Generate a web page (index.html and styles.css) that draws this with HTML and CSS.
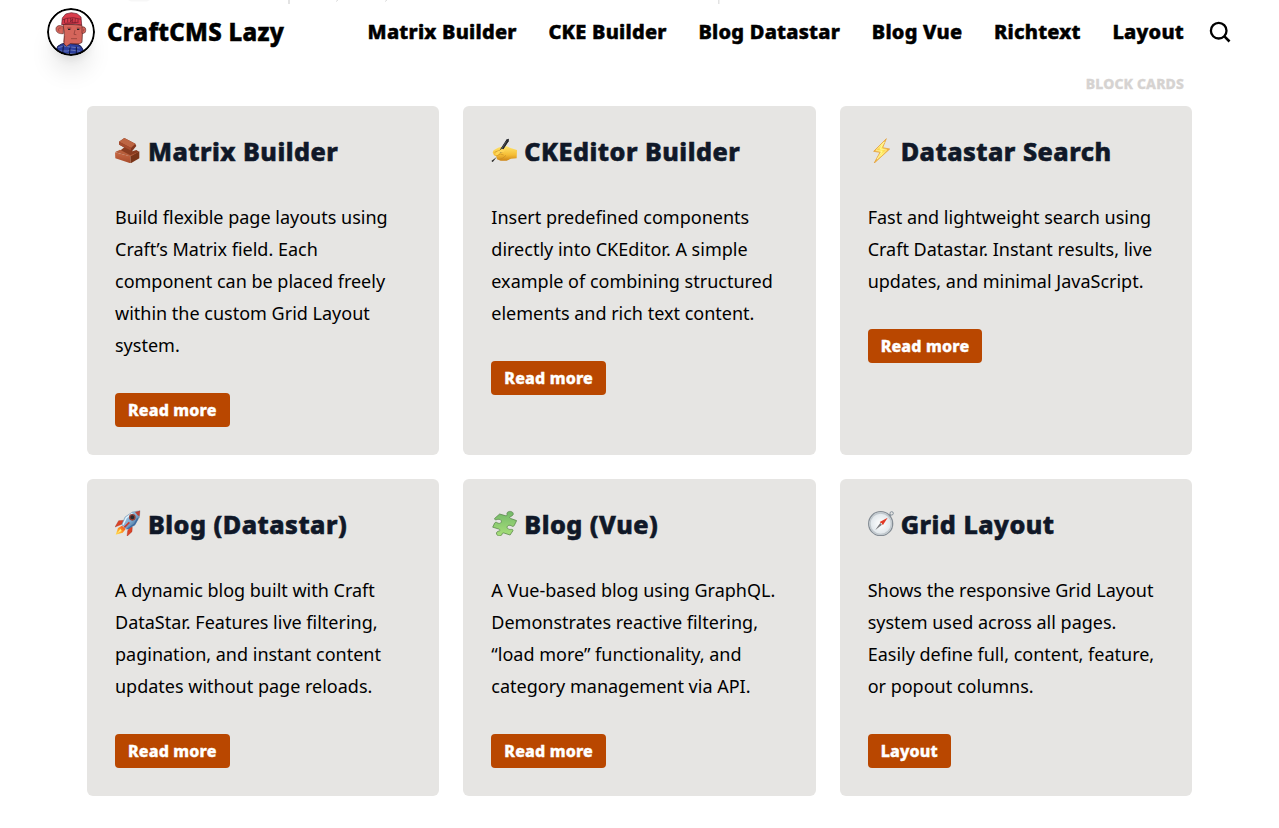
FILE: index.html
```html
<!DOCTYPE html>
<html lang="en">
<head>
<meta charset="utf-8">
<title>CraftCMS Lazy</title>
<link rel="stylesheet" href="styles.css">
</head>
<body>
<svg class="scrolled" viewBox="0 0 1279 4" aria-hidden="true"><path d="M128 0h22l-3 1.500h-16z" fill="#f7f7f7"/><path d="M288 0h2v4h-2zM718 0h1.500v4h-1.500z" fill="#e3e3e3"/><path d="M336 1.500l2-1.500M385 1.500l2-1.500" stroke="#ddd" fill="none"/></svg>
<header class="header">
  <a class="brand">
    <svg class="avatar" viewBox="27 24 144 144">
      <defs><clipPath id="face"><circle cx="99" cy="96" r="69"/></clipPath></defs>
      <circle cx="99" cy="96" r="69" fill="#fff"/>
      <g clip-path="url(#face)">
        <path d="M55 151l4-12 12-7 14-3 34 4 10 6 7 12-10 18H58z" fill="#2c3f9f" stroke="#17194a" stroke-width="3"/>
        <path d="M61 143l17-5 18 3M60 153h29l9-3 29 4M100 141l25 3M81 160l35 2" fill="none" stroke="#8793c7" stroke-width="2"/>
        <path d="M76 137l-2 25M96 143l-2 25M115 140v20" stroke="#11153f" stroke-width="3"/>
        <path d="M75 72l56 3 3 10-2 42-9 5-26-1-11 8-8-7 1-32z" fill="#d5655b" stroke="#4d1d1b" stroke-width="2"/>
        <path d="M76 80c-12-7-23-2-22 8s9 14 22 13zM132 81c9-2 12 4 11 11s-5 9-11 8z" fill="#d5655b" stroke="#602927" stroke-width="2"/>
        <path d="M70 84c-9-1-10 3-7 10M138 87l-2 7M80 108l-3 19M101 130l22 2" fill="none" stroke="#8a3936" stroke-width="2"/>
        <path d="M71 74l2-20 10-12 17-4 17 3 12 10 2 24-20-3-24 1z" fill="#d93d4c" stroke="#5f1724" stroke-width="2"/>
        <path d="M73 60l13-5 20-2 23 5M80 57l-1 12M89 55v12M98 54v12l6-10v12M112 55l-1 13M120 57v12M80 70l39-3" fill="none" stroke="#681a29" stroke-width="2"/>
        <path d="M87 84h13M116 84h12" stroke="#a8403e" stroke-width="3"/>
        <path d="M90 86h7v4h-7zM117 86h7v4h-7z" fill="#182226"/>
        <path d="M111 90l-3 13 7 1M99 116h18" fill="none" stroke="#8c3c37" stroke-width="2.200"/>
      </g>
      <circle cx="99" cy="96" r="69" fill="none" stroke="#000" stroke-width="6"/>
    </svg>
    <span>CraftCMS Lazy</span>
  </a>
  <nav class="nav"><a>Matrix Builder</a><a>CKE Builder</a><a>Blog Datastar</a><a>Blog Vue</a><a>Richtext</a><a>Layout</a></nav>
  <svg class="search" viewBox="0 0 24 24"><circle cx="10.700" cy="10.700" r="7.800" fill="none" stroke="#000" stroke-width="2.300"/><path d="M16.200 16.200l5.300 5.300" stroke="#000" stroke-width="2.600"/></svg>
</header>
<main class="main">
  <p class="label">BLOCK CARDS</p>
  <div class="grid">
    <article class="card">
      <h2><svg class="emoji" viewBox="30 21 78 78">
        <defs><linearGradient id="brick" x2="0" y2="1"><stop stop-color="#c86945"/><stop offset="1" stop-color="#a64a29"/></linearGradient></defs>
        <path d="M42 35l16-11 33 17 3 7-14 17-37-21z" fill="#83371f"/>
        <path d="M42 35l16-11 33 17-13 13z" fill="#bd6543"/><path d="M42 35l36 18v10L43 44z" fill="#a64b2d"/>
        <path d="M45 62l13-10 24 12 12-4 8 5-24 14-46-13z" fill="#8a3c20"/>
        <path d="M30 67l46 12 1 21-46-15z" fill="url(#brick)"/><path d="M76 79l27-15v21l-26 15z" fill="#793519"/>
        <path d="M31 66l14-7 31 17 24-10-23 13z" fill="#b85f3c"/>
      </svg><span>Matrix Builder</span></h2>
      <p>Build flexible page layouts using Craft’s Matrix field. Each component can be placed freely within the custom Grid Layout system.</p>
      <a class="button">Read more</a>
    </article>
    <article class="card">
      <h2><svg class="emoji" viewBox="28 21 78 78">
        <defs><linearGradient id="hand" x2="0" y2="1"><stop stop-color="#ffe46b"/><stop offset=".6" stop-color="#f5bd35"/><stop offset="1" stop-color="#ce8617"/></linearGradient></defs>
        <path d="M36 61l13-8 10-3 16-1 14 6 17 5-1 25-17 1-13 6H57l-11-4-2-9-7-3-4-9z" fill="url(#hand)"/>
        <path d="M39 67l12-5 12 4M44 78l12-6 10 3M52 89l12-5 9-8" fill="none" stroke="#c98d22" stroke-width="2"/>
        <path d="M76 28l6-2-1 8-22 33-6 3 1-8z" fill="#26282d"/><path d="M78 30L55 66" stroke="#26282d" stroke-width="7"/><path d="M74 34l-18 29" stroke="#7b7d80" stroke-width="1.500"/>
        <path d="M45 81l-11 14-4 1 2-5z" fill="#292928"/><path d="M42 68l19-12 9 4-5 6-10 2-8 8-6-2z" fill="#ffd759"/>
      </svg><span>CKEditor Builder</span></h2>
      <p>Insert predefined components directly into CKEditor. A simple example of combining structured elements and rich text content.</p>
      <a class="button">Read more</a>
    </article>
    <article class="card">
      <h2><svg class="emoji" viewBox="29 21 78 78">
        <defs><linearGradient id="bolt" x2="1"><stop stop-color="#f4a72c"/><stop offset=".5" stop-color="#fff15e"/><stop offset="1" stop-color="#f7a325"/></linearGradient></defs>
        <path d="M84 26L46 64l19 3-18 33 47-43-21-4z" fill="url(#bolt)" stroke="#e4a343" stroke-width="2.500" stroke-linejoin="round"/>
        <path d="M78 36L53 61l18 3-15 23 29-27-20-3z" fill="none" stroke="#fff8b4" stroke-width="2"/>
      </svg><span>Datastar Search</span></h2>
      <p>Fast and lightweight search using Craft Datastar. Instant results, live updates, and minimal JavaScript.</p>
      <a class="button">Read more</a>
    </article>
    <article class="card">
      <h2><svg class="emoji" viewBox="30 21 78 78">
        <defs><linearGradient id="hull" x2="1" y2="1"><stop stop-color="#b9d8ee"/><stop offset=".5" stop-color="#83aed2"/><stop offset="1" stop-color="#244b78"/></linearGradient><linearGradient id="flame" x1="1" y1="0" x2="0" y2="1"><stop stop-color="#e83c20"/><stop offset=".55" stop-color="#ff9b24"/><stop offset="1" stop-color="#ffe35a"/></linearGradient></defs>
        <path d="M56 52L41 53 30 72l15-6 14-6zM82 73l-1 13-15 14 2-17 7-12z" fill="#dc4327" stroke="#952c20"/>
        <path d="M51 68l-12 7-7 20 21-6 9-11z" fill="url(#flame)"/><path d="M46 77l-9 14 13-7z" fill="#fff078"/>
        <path d="M50 65l10-23 22-15 23-4-2 20-14 24-24 12z" fill="url(#hull)" stroke="#5d7992"/>
        <path d="M90 27l15-4-2 17-5-3z" fill="#bd4136"/><path d="M54 65l10-21 18-13" fill="none" stroke="#e4f5ff" stroke-width="4"/><path d="M67 78l22-15 9-17" fill="none" stroke="#3f6ba1" stroke-width="4"/>
        <circle cx="82" cy="43" r="8" fill="#27292f" stroke="#943f37" stroke-width="4"/><path d="M73 58l-15 15" stroke="#c63c2e" stroke-width="5"/>
      </svg><span>Blog (Datastar)</span></h2>
      <p>A dynamic blog built with Craft DataStar. Features live filtering, pagination, and instant content updates without page reloads.</p>
      <a class="button">Read more</a>
    </article>
    <article class="card">
      <h2><svg class="emoji" viewBox="28 21 78 78">
        <defs><linearGradient id="puzzle" x2="0" y2="1"><stop stop-color="#73b969"/><stop offset="1" stop-color="#a8df79"/></linearGradient></defs>
        <path d="M56 32l14 5c4 2 6-1 5-4-2-9 9-12 14-7 5 6 1 12-5 14-3 1-2 4 0 6l16 7-6 15c-2 5-5 4-7 2-7-6-14 1-11 7 2 5 8 4 11 4 4 0 4 3 3 5l-7 13-15-6c-5-2-5 1-6 4-2 7-12 6-14-1-2-6 3-9 7-10 4-2 1-5-1-6l-16-6 5-13c2-4 5-3 7-1 7 5 12-1 10-7-2-5-8-5-12-3-4 1-6-1-5-4z" transform="matrix(1.16 0 0 .94 -11 3)" fill="url(#puzzle)" stroke="#527e43" stroke-width="2"/>
      </svg><span>Blog (Vue)</span></h2>
      <p>A Vue-based blog using GraphQL. Demonstrates reactive filtering, “load more” functionality, and category management via API.</p>
      <a class="button">Read more</a>
    </article>
    <article class="card">
      <h2><svg class="emoji" viewBox="29 21 78 78">
        <defs><radialGradient id="dial"><stop stop-color="#fff"/><stop offset="1" stop-color="#dce3e8"/></radialGradient></defs>
        <circle cx="100" cy="31" r="5" fill="none" stroke="#85919b" stroke-width="3"/><path d="M91 35l6 6" stroke="#7a8690" stroke-width="6"/>
        <circle cx="67" cy="62" r="36" fill="url(#dial)" stroke="#858d95" stroke-width="4"/><circle cx="67" cy="62" r="32" fill="none" stroke="#c2c9ce" stroke-width="4"/>
        <path d="M88 44L74 66l-10-9z" fill="#e23a26"/><path d="M66 59l5 6-20 16z" fill="#77787b"/><circle cx="69" cy="62" r="2" fill="#eee"/>
      </svg><span>Grid Layout</span></h2>
      <p>Shows the responsive Grid Layout system used across all pages. Easily define full, content, feature, or popout columns.</p>
      <a class="button">Layout</a>
    </article>
  </div>
</main>
</body>
</html>
```
FILE: styles.css
```css
* { box-sizing: border-box; }
body {
  margin: 0;
  height: 828px;
  overflow: hidden;
  background: #fff;
  color: #000;
  font-family: "Noto Sans", sans-serif;
  font-size: 18px;
  line-height: 32px;
}
p, h2 { margin: 0; }
.scrolled { position: absolute; top: 0; left: 0; width: 1279px; height: 4px; }
.header {
  display: flex;
  align-items: center;
  height: 64px;
  padding: 0 47px;
}
.brand {
  display: flex;
  align-items: center;
  gap: 12px;
  font-size: 24px;
  font-weight: 800;
  letter-spacing: .28px;
  -webkit-text-stroke: .5px currentColor;
}
.avatar {
  width: 48px;
  height: 48px;
  border-radius: 50%;
  box-shadow: 0 20px 25px -5px rgb(0 0 0 / .1), 0 8px 10px -6px rgb(0 0 0 / .1);
}
.nav {
  display: flex;
  gap: 31.7px;
  margin-left: auto;
  font-size: 20px;
  font-weight: 800;
  letter-spacing: .24px;
  -webkit-text-stroke: .5px currentColor;
}
.search { width: 24px; height: 24px; margin-left: 24px; }
.main { padding: 10px 87px 0; }
.label {
  height: 32px;
  padding-right: 8px;
  line-height: 20px;
  font-size: 14px;
  font-weight: 800;
  letter-spacing: .13px;
  text-align: right;
  color: #d6d3d1;
  -webkit-text-stroke: .3px currentColor;
}
.grid {
  display: grid;
  grid-template-columns: repeat(3, 1fr);
  grid-template-rows: 349px 317px;
  gap: 24px;
}
.card {
  padding: 27px 28px;
  border-radius: 6px;
  background: #e6e5e3;
}
.card h2 {
  display: flex;
  gap: 7px;
  height: 36px;
  margin-bottom: 32px;
  line-height: 36px;
  font-size: 25.2px;
  font-weight: 800;
  letter-spacing: .48px;
  color: #101828;
  white-space: nowrap;
  -webkit-text-stroke: .6px currentColor;
}
.emoji { flex: none; width: 26px; height: 26px; margin-top: 4px; }
.button {
  display: block;
  width: fit-content;
  height: 34px;
  margin-top: 32px;
  padding: 0 13px;
  border-radius: 4px;
  background: #b94700;
  color: #fff;
  font-size: 16px;
  font-weight: 800;
  letter-spacing: .18px;
  line-height: 34px;
  -webkit-text-stroke: .4px currentColor;
}
```
